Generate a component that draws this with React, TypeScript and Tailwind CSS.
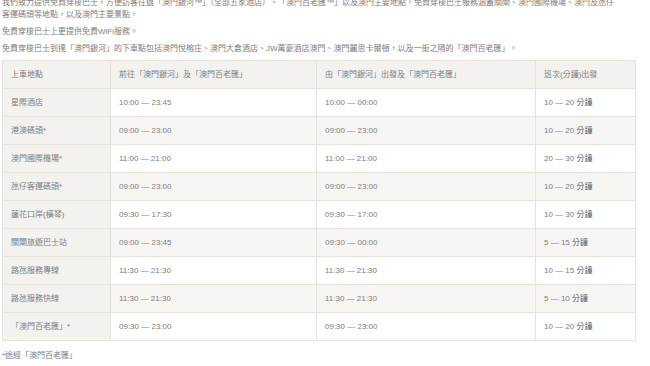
const ROWS: [string, string, string, string][] = [
  ["星際酒店", "10:00 — 23:45", "10:00 — 00:00", "10 — 20"],
  ["港澳碼頭*", "09:00 — 23:00", "09:00 — 23:00", "10 — 20"],
  ["澳門國際機場*", "11:00 — 21:00", "11:00 — 21:00", "20 — 30"],
  ["氹仔客運碼頭*", "09:00 — 23:00", "09:00 — 23:00", "10 — 20"],
  ["蓮花口岸(橫琴)", "09:30 — 17:30", "09:30 — 17:00", "10 — 30"],
  ["關閘旅遊巴士站", "09:00 — 23:45", "09:30 — 00:00", "5 — 15"],
  ["路氹服務專線", "11:30 — 21:30", "11:30 — 21:30", "10 — 15"],
  ["路氹服務快線", "11:30 — 21:30", "11:30 — 21:30", "5 — 10"],
  ["「澳門百老匯」*", "09:30 — 23:00", "09:30 — 23:00", "10 — 20"],
];

const cell = "h-[28px] border border-[#e6e3dd] px-[8px] text-left align-middle font-normal";

export default function App() {
  return (
    <div className="h-[366px] w-[650px] overflow-hidden bg-white pl-[2px] text-[8px] leading-[12px] text-[#7d7d7d] [font-family:'Liberation_Sans','Noto_Sans_CJK_TC',sans-serif]">
      <p className="mt-[-3px]">
        我們致力提供免費穿梭巴士，方便訪客往返「澳門銀河™」（全部五家酒店）、「澳門百老匯™」以及澳門主要地點。免費穿梭巴士服務涵蓋關閘、澳門國際機場、澳門及氹仔
        <br />
        客運碼頭等地點，以及澳門主要景點。
      </p>
      <p className="mt-[5px]">免費穿梭巴士上更提供免費WiFi服務。</p>
      <p className="mt-[5px]">
        免費穿梭巴士到達「澳門銀河」的下車點包括澳門悅榕庄、澳門大倉酒店、JW萬豪酒店澳門、澳門麗思卡爾頓，以及一街之隔的「澳門百老匯」。
      </p>

      <table className="mt-[5px] w-[633px] table-fixed border-collapse">
        <colgroup>
          <col className="w-[108px]" />
          <col className="w-[206px]" />
          <col className="w-[219px]" />
          <col className="w-[100px]" />
        </colgroup>
        <thead>
          <tr className="bg-[#f4f2ee]">
            <th className={cell}>上車地點</th>
            <th className={cell}>前往「澳門銀河」及「澳門百老匯」</th>
            <th className={cell}>由「澳門銀河」出發及「澳門百老匯」</th>
            <th className={cell}>班次(分鐘)出發</th>
          </tr>
        </thead>
        <tbody>
          {ROWS.map(([stop, to, from, freq], i) => (
            <tr key={stop} className={i % 2 === 1 ? "bg-[#f7f6f3]" : "bg-white"}>
              <td className={`${cell} bg-[#f4f2ee]`}>{stop}</td>
              <td className={cell}>{to}</td>
              <td className={cell}>{from}</td>
              <td className={cell}>
                {freq} <span className="text-[#5e5e5e]">分鐘</span>
              </td>
            </tr>
          ))}
        </tbody>
      </table>

      <p className="mt-[9px]">*途經「澳門百老匯」</p>
    </div>
  );
}
